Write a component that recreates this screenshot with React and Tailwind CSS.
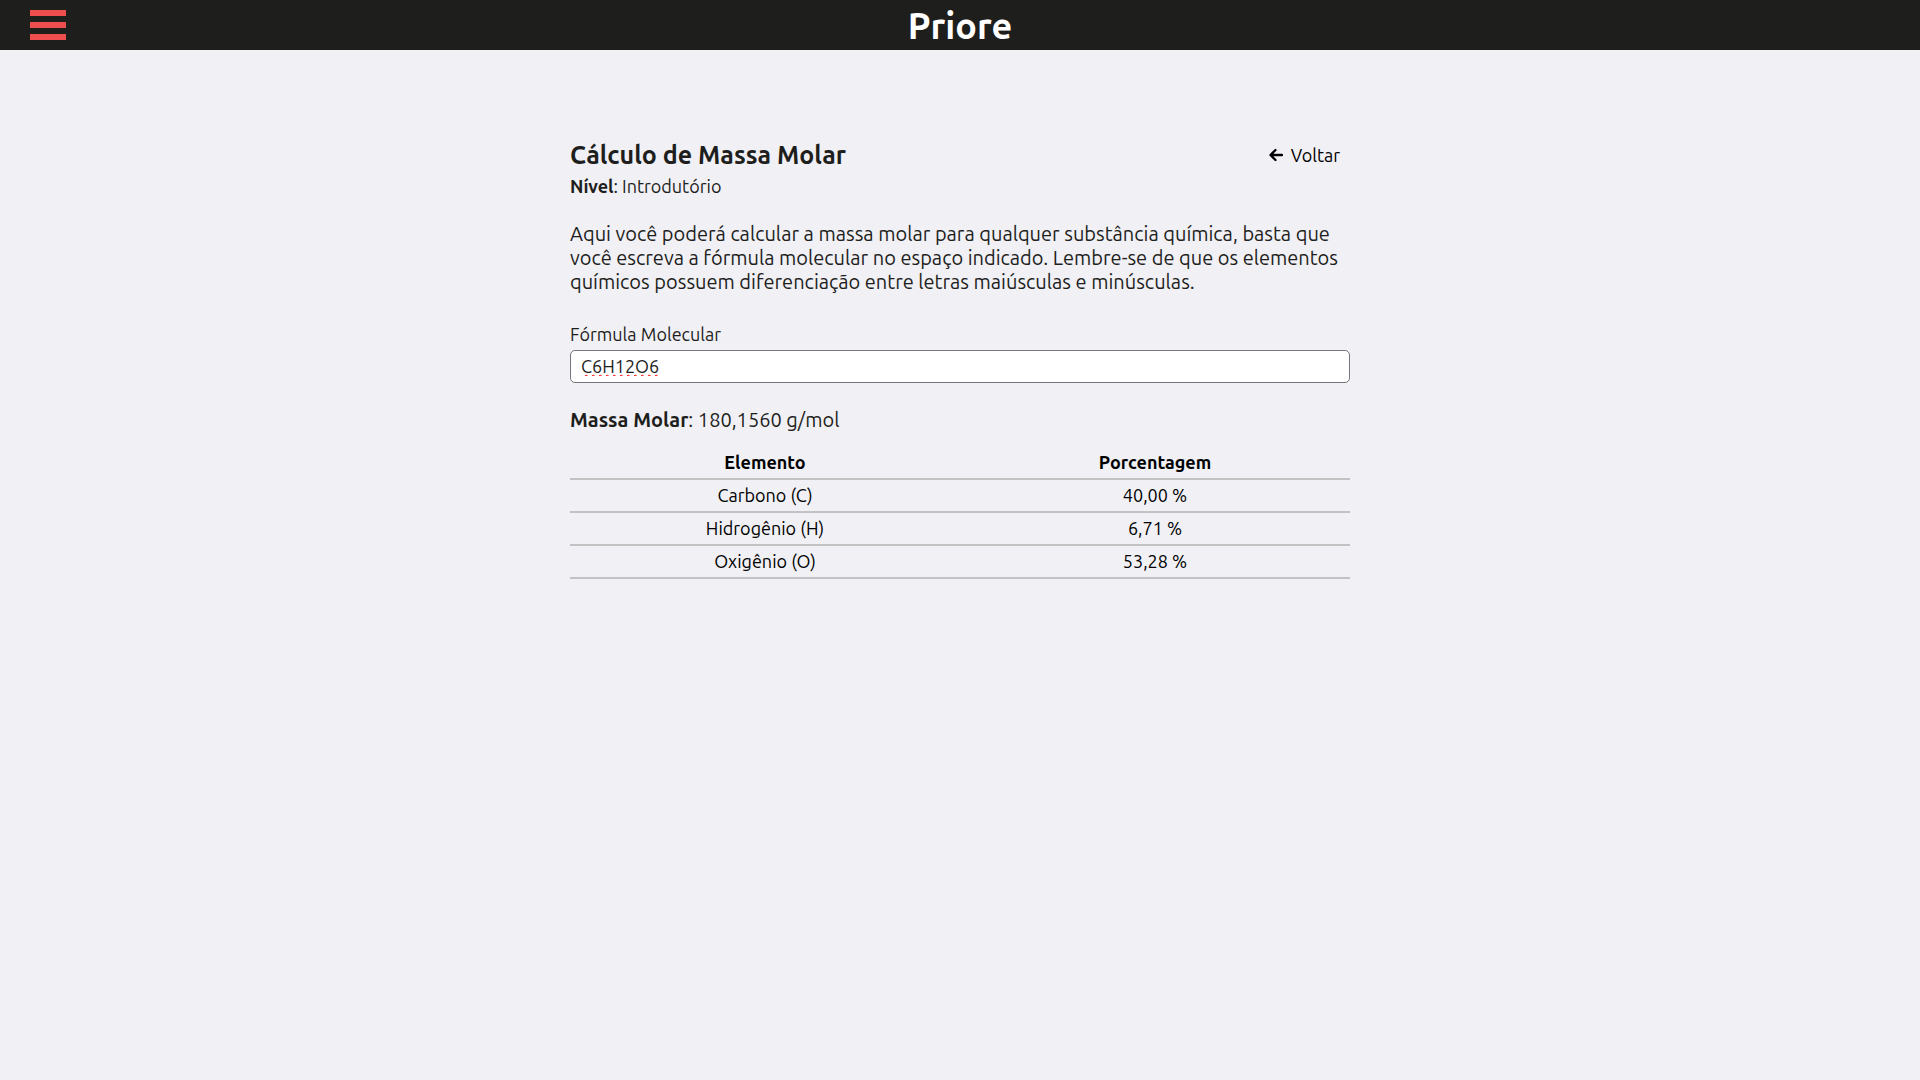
import { useState } from "react";

const rows = [
  ["Carbono (C)", "40,00 %"],
  ["Hidrogênio (H)", "6,71 %"],
  ["Oxigênio (O)", "53,28 %"],
];

function Header() {
  return (
    <header className="grid h-[50px] grid-cols-[1fr_auto_1fr] items-center bg-[#1e1e1c] px-[30px]">
      <button type="button" aria-label="Menu" className="flex w-9 flex-col gap-1.5">
        <span className="h-1.5 w-full bg-[#ee4f4e]" />
        <span className="h-1.5 w-full bg-[#ee4f4e]" />
        <span className="h-1.5 w-full bg-[#ee4f4e]" />
      </button>
      <a href="#" className="pt-0.5 text-4xl leading-[48px] font-bold text-white">
        Priore
      </a>
    </header>
  );
}

function BackButton() {
  return (
    <button type="button" className="flex items-center gap-2 px-2.5 text-lg leading-6 text-black">
      <svg
        viewBox="0 0 14 14"
        className="size-3.5"
        fill="none"
        stroke="currentColor"
        strokeWidth="2.3"
        strokeLinecap="round"
        strokeLinejoin="round"
        aria-hidden="true"
      >
        <path d="M6.5 2 1.5 7l5 5M2 7h11" />
      </svg>
      Voltar
    </button>
  );
}

export default function App() {
  const [formula, setFormula] = useState("C6H12O6");

  return (
    <div className="min-h-screen bg-[#f0f0f5] font-['Ubuntu','Noto_Sans',sans-serif] text-[#1e1e1c]">
      <Header />
      <main className="mx-auto max-w-[780px] pt-[88px]">
        <div className="flex items-center justify-between">
          <h1 className="text-[25px] leading-[34px] font-bold">Cálculo de Massa Molar</h1>
          <BackButton />
        </div>
        <p className="mt-0.5 text-lg leading-6">
          <strong>Nível</strong>: Introdutório
        </p>
        <p className="mt-6 text-xl leading-6">
          Aqui você poderá calcular a massa molar para qualquer substância química, basta que você
          escreva a fórmula molecular no espaço indicado. Lembre-se de que os elementos químicos
          possuem diferenciação entre letras maiúsculas e minúsculas.
        </p>
        <label htmlFor="formula" className="mt-7 block text-lg leading-6">
          Fórmula Molecular
        </label>
        <input
          id="formula"
          type="text"
          value={formula}
          onChange={(e) => setFormula(e.target.value)}
          className="mt-1 block h-[33px] w-full rounded-[5px] border border-[#76767b] bg-white px-2.5 pb-0.5 text-lg underline decoration-[#ff0000] decoration-wavy decoration-1 underline-offset-1 [text-decoration-skip-ink:none]"
        />
        <p className="mt-[25px] text-xl leading-6">
          <strong>Massa Molar</strong>: 180,1560 g/mol
        </p>
        <table className="mt-[15px] w-full table-fixed border-collapse text-center text-lg leading-[31px] text-black">
          <thead>
            <tr className="border-b-2 border-[#c2c2c2]">
              <th scope="col" className="font-bold">Elemento</th>
              <th scope="col" className="font-bold">Porcentagem</th>
            </tr>
          </thead>
          <tbody>
            {rows.map(([name, share]) => (
              <tr key={name} className="border-b-2 border-[#c2c2c2]">
                <td>{name}</td>
                <td>{share}</td>
              </tr>
            ))}
          </tbody>
        </table>
      </main>
    </div>
  );
}
